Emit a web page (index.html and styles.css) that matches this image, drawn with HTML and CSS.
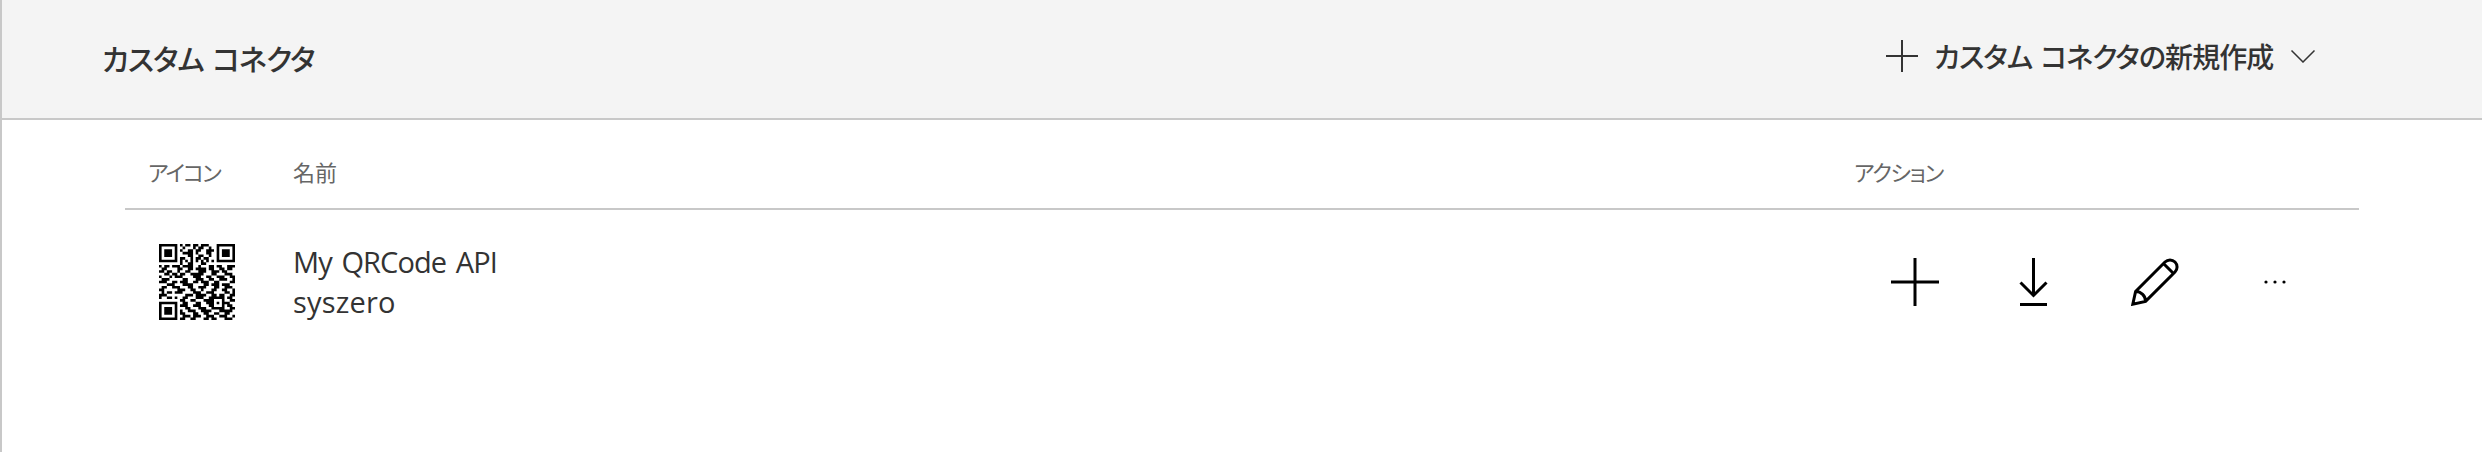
FILE: index.html
```
<!DOCTYPE html>
<html lang="ja">
<head>
    <meta charset="UTF-8">
    <meta name="viewport" content="width=device-width, initial-scale=1.0">
    <title>カスタム コネクタ</title>
    <link rel="stylesheet" href="styles.css">
</head>
<body>

<header class="header">
    <h1 class="title">カスタム コネクタ</h1>
    <div class="create">
        <svg class="create-plus" viewBox="0 0 32 32"><path d="M16 0v32M0 16h32"/></svg>
        <span class="create-label">カスタム コネクタの新規作成</span>
        <svg class="chevron" viewBox="0 0 26 14"><path d="M1.5 1.5L13 13L24.5 1.5"/></svg>
    </div>
</header>

<main class="list">
    <div class="row list-head">
        <div class="head-icon">アイコン</div>
        <div class="head-name">名前</div>
        <div class="head-action">アクション</div>
    </div>
    <div class="row connector">
        <div class="cell-icon"><svg class="qr" id="qr" viewBox="0 0 29 29"></svg></div>
        <div class="cell-name">
            <div class="name">My QRCode API</div>
            <div class="owner">syszero</div>
        </div>
        <div class="actions">
            <svg class="icon" viewBox="0 0 48 48"><path d="M24 0v48M0 24h48"/></svg>
            <svg class="icon download" viewBox="0 0 48 48"><path d="M23.5 0v38M10.5 24.5l13 13l13-13M10 46.5h27"/></svg>
            <svg class="icon" viewBox="0 0 48 48"><path d="M1.8 46.2L4.6 33.4L34 4A6.6 6.6 0 0 1 44 14L14.6 43.4ZM4.6 33.4A10 10 0 0 1 14.6 43.4M32.5 5.5L42.5 15.5"/></svg>
            <svg class="icon dots" viewBox="0 0 48 48"><circle cx="15" cy="24" r="1.6"/><circle cx="24" cy="24" r="1.6"/><circle cx="33" cy="24" r="1.6"/></svg>
        </div>
    </div>
</main>

<script>
    const modules = [
        "11111110101101101110001111111",
        "10000010010001011001001000001",
        "10111010100110110011101011101",
        "10111010011110100011001011101",
        "10111010000110011001001011101",
        "10000010110010110110001000001",
        "11111110101010101010101111111",
        "00000000100110001100000000000",
        "10110111011110010001101100111",
        "01100001100110111101100110110",
        "11011001001100011100111011000",
        "00110110110011111000110001110",
        "10001011100001110011001110011",
        "01110000011000111001100111001",
        "11100110111001101110011000011",
        "00011100011110000110111011100",
        "01100111000110011100011001110",
        "11000001110011001000110011001",
        "01011011100001110011100001101",
        "11100000001110111100110110011",
        "10011010011000111001111110110",
        "00000000110011000111100010011",
        "11111110011000110011101011100",
        "10000010111001110001100010110",
        "10111010001100011100111110011",
        "10111010100111001111000111110",
        "10111010110001100110011001100",
        "10000010011101110011100111001",
        "11111110110011000110110001110"
    ];
    let path = "";
    modules.forEach((line, y) => {
        for (let x = 0; x < line.length; x++) {
            if (line[x] === "1") {
                path += "M" + x + " " + y + "h1v1h-1z";
            }
        }
    });
    document.getElementById("qr").innerHTML = '<path d="' + path + '"/>';
</script>

</body>
</html>
```
FILE: styles.css
```
* {
    box-sizing: border-box;
}
body {
    margin: 0;
    height: 452px;
    border-left: 2px solid #c8c8c8;
    background: #fff;
    color: #333;
    font-family: "Open Sans", "Noto Sans CJK JP", sans-serif;
    overflow: hidden;
}
.header {
    display: flex;
    justify-content: space-between;
    height: 120px;
    padding: 0 166px 0 100px;
    background: #f4f4f4;
    border-bottom: 2px solid #c8c8c8;
}
.title {
    margin: 0;
    font-family: "Noto Sans CJK JP", sans-serif;
    font-size: 29px;
    font-weight: 500;
    line-height: 116px;
    letter-spacing: -0.9px;
    word-spacing: 3px;
    font-feature-settings: "palt";
}
.create {
    display: flex;
    align-items: center;
    height: 112px;
}
.create-plus {
    width: 32px;
    height: 32px;
    margin-right: 16px;
    fill: none;
    stroke: #333;
    stroke-width: 2;
}
.create-label {
    width: 340px;
    margin-right: 16px;
    font-family: "Noto Sans CJK JP", sans-serif;
    font-size: 28px;
    font-weight: 500;
    letter-spacing: -0.9px;
    word-spacing: 3px;
    white-space: nowrap;
    font-feature-settings: "palt";
}
.chevron {
    width: 26px;
    height: 14px;
    fill: none;
    stroke: #333;
    stroke-width: 1.5;
}
.list {
    margin: 0 123px;
}
.row {
    display: grid;
    grid-template-columns: 168px 1562px 1fr;
}
.list-head {
    height: 90px;
    border-bottom: 2px solid #c8c8c8;
    color: #666;
    font-family: "Noto Sans CJK JP", sans-serif;
    font-size: 22px;
    line-height: 102px;
    font-feature-settings: "palt";
}
.head-icon {
    padding-left: 23px;
    letter-spacing: -1.8px;
}
.head-action {
    margin-left: -1px;
    letter-spacing: -1.3px;
}
.connector {
    padding-top: 32px;
}
.cell-icon {
    padding: 2px 0 0 34px;
}
.qr {
    display: block;
    width: 76px;
    height: 76px;
}
.cell-name {
    font-size: 29px;
    line-height: 40px;
}
.name {
    letter-spacing: -0.9px;
    word-spacing: 3px;
}
.owner {
    letter-spacing: 0.2px;
}
.actions {
    display: flex;
    gap: 72px;
    padding: 16px 0 0 36px;
}
.icon {
    width: 48px;
    height: 48px;
    fill: none;
    stroke: #000;
    stroke-width: 3;
}
.download {
    margin: 0 1px 0 -1px;
}
.dots {
    fill: #000;
    stroke: none;
}
```
